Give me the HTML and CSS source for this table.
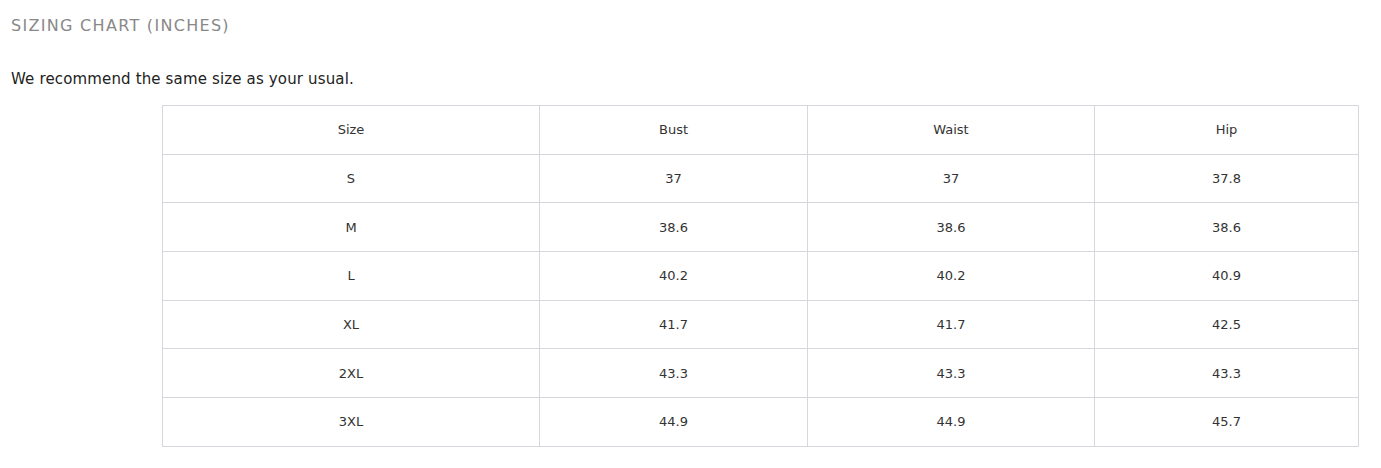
FILE: index.html
```html
<!DOCTYPE html>
<html>
<head>
<meta charset="utf-8">
<link rel="stylesheet" href="styles.css">
</head>
<body>
<div class="page">
  <h3 class="title">SIZING CHART (INCHES)</h3>
  <p class="note">We recommend the same size as your usual.</p>
  <div class="table-wrap">
    <table class="chart">
      <colgroup>
        <col class="c1"><col class="c2"><col class="c3"><col class="c4">
      </colgroup>
      <tr><td>Size</td><td>Bust</td><td>Waist</td><td>Hip</td></tr>
      <tr><td>S</td><td>37</td><td>37</td><td>37.8</td></tr>
      <tr><td>M</td><td>38.6</td><td>38.6</td><td>38.6</td></tr>
      <tr><td>L</td><td>40.2</td><td>40.2</td><td>40.9</td></tr>
      <tr><td>XL</td><td>41.7</td><td>41.7</td><td>42.5</td></tr>
      <tr><td>2XL</td><td>43.3</td><td>43.3</td><td>43.3</td></tr>
      <tr><td>3XL</td><td>44.9</td><td>44.9</td><td>45.7</td></tr>
    </table>
  </div>
</div>
</body>
</html>
```
FILE: styles.css
```css
html, body {
  margin: 0;
  padding: 0;
  background: #fff;
}
.page {
  padding: 14px 22px 0 11px;
  font-family: "DejaVu Sans", "Noto Sans", sans-serif;
  color: #333;
}
.title {
  margin: 0;
  font-size: 16px;
  font-weight: 400;
  letter-spacing: 1.3px;
  color: #888;
  line-height: 24px;
}
.note {
  margin: 31px 0 16px;
  font-size: 15px;
  line-height: 20px;
  letter-spacing: 0.15px;
  color: #222;
}
.table-wrap {
  padding-left: 151px;
}
.chart {
  width: 1197px;
  border-collapse: collapse;
  table-layout: fixed;
}
.c1 { width: 377px; }
.c2 { width: 268px; }
.c3 { width: 287px; }
.c4 { width: 264px; }
.chart td {
  border: 1px solid #d6d6dc;
  text-align: center;
  height: 47.7px;
  padding: 0;
  font-size: 13px;
  letter-spacing: 0;
  color: #333;
}
```
